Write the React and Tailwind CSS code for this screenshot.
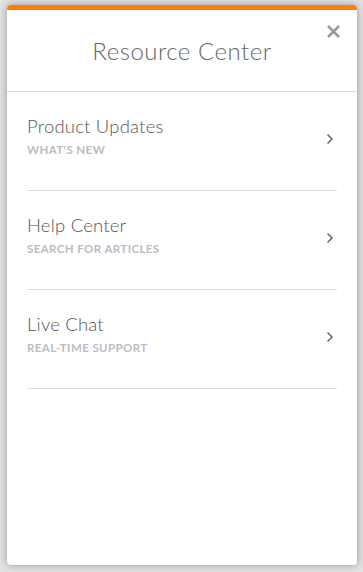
import React from "react";

const items = [
  { title: "Product Updates", sub: "WHAT'S NEW" },
  { title: "Help Center", sub: "SEARCH FOR ARTICLES" },
  { title: "Live Chat", sub: "REAL-TIME SUPPORT" },
];

const Chevron = () => (
  <svg width="8" height="12" viewBox="0 0 8 12" fill="none" className="shrink-0">
    <path d="M1.5 1.5L6 6l-4.5 4.5" stroke="#666" strokeWidth="1.5" />
  </svg>
);

export default function App() {
  return (
    <div className="w-[363px] h-[572px] bg-[#e3e3e3] pt-[5px] pl-[7px] font-['Lato','Noto_Sans',sans-serif]">
      <div className="w-[350px] h-[560px] bg-white rounded-[4px] overflow-hidden shadow-[0_0_9px_rgba(0,0,0,0.35)] flex flex-col">
        <div className="h-[5px] bg-[#ff7f00]" />
        {/* header */}
        <div className="relative h-[82px] border-b border-[#dcdce2] flex items-center justify-center">
          <h1 className="text-[24px] text-[#666] font-light tracking-[0.5px]">Resource Center</h1>
          <button className="absolute right-[16px] top-[14px]" aria-label="Close">
            <svg width="15" height="15" viewBox="0 0 15 15">
              <path d="M2 2l11 11M13 2L2 13" stroke="#999" strokeWidth="2.5" />
            </svg>
          </button>
        </div>
        <div className="px-5">
          {items.map((it) => (
            <div
              key={it.title}
              className="h-[99px] border-b border-[#dcdce2] flex items-center justify-between pr-[3px] pb-[4px]"
            >
              <div className="flex flex-col mb-[5px]">
                <span className="text-[18.5px] leading-[22px] text-[#555] font-light tracking-[0.2px]">{it.title}</span>
                <span className="text-[11.5px] leading-[16px] mt-[5px] font-bold text-[#bbbcc4] tracking-[0.4px]">
                  {it.sub}
                </span>
              </div>
              <Chevron />
            </div>
          ))}
        </div>
      </div>
    </div>
  );
}
